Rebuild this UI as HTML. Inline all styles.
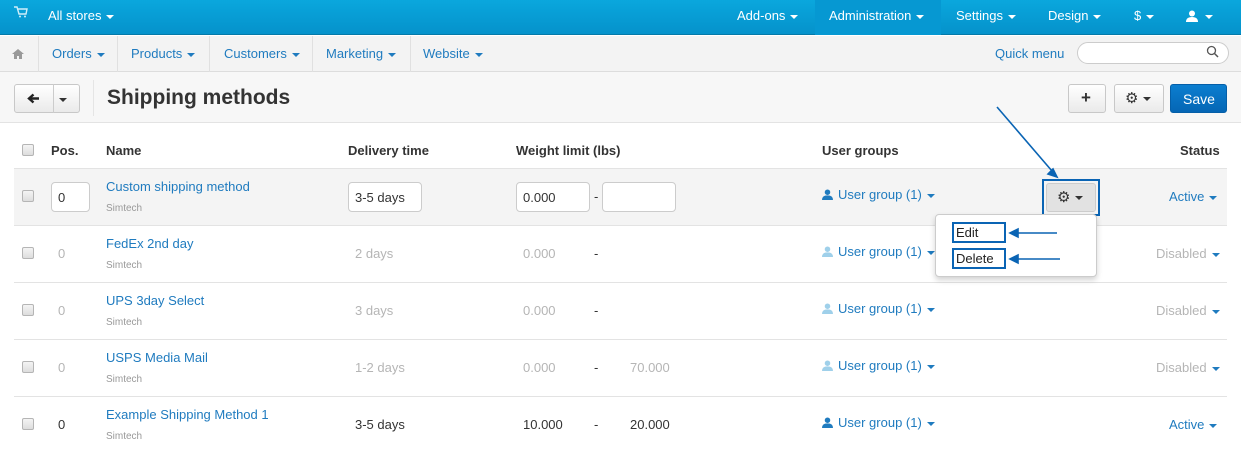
<!DOCTYPE html><html><head><style>
*{box-sizing:border-box;margin:0;padding:0}
body{width:1241px;height:459px;overflow:hidden;background:#fff;font-family:"Liberation Sans",Arial,sans-serif;font-size:13px;color:#333;position:relative}
.a{position:absolute;white-space:nowrap}
.top{position:absolute;left:0;top:0;width:1241px;height:35px;background:linear-gradient(#0aa7dd,#0592cb);border-bottom:1px solid #0479a8}
.top .a{color:#fff;font-size:13px;top:8px}
.car{display:inline-block;width:0;height:0;border-left:4px solid transparent;border-right:4px solid transparent;border-top:4px solid currentColor;vertical-align:middle;margin-left:5px}
.nav{position:absolute;left:0;top:36px;width:1241px;height:36px;background:#f3f3f3;border-bottom:1px solid #ddd}
.nav .a{color:#1f7bbf;top:10px}
.sep{position:absolute;top:0;width:1px;height:36px;background:#e0e0e0}
.hdr{position:absolute;left:0;top:72px;width:1241px;height:51px;background:#f7f7f7;border-bottom:1px solid #e3e3e3}
.btn{position:absolute;background:linear-gradient(#fff,#eaeaea);border:1px solid #c8c8c8;border-radius:3px}
.row{position:absolute;left:14px;width:1213px;border-top:1px solid #e3e3e3}
.cb{position:absolute;width:12px;height:12px;border:1px solid #b5b5b5;border-radius:2px;background:linear-gradient(#f4f4f4,#ddd)}
.lnk{color:#1f7bbf}
.sm{font-size:10px;color:#999}
.g{color:#b5b5b5}
.in{position:absolute;background:#fff;border:1px solid #ccc;border-radius:4px;padding:7px 6px}
.th{font-weight:bold;top:143px}
.ug svg{vertical-align:-1px;margin-right:5px}
</style></head><body>
<div class="top">
<svg class="a" style="left:14px;top:6px" width="14" height="12" viewBox="0 0 14 12"><path d="M0 1h3l2 7h7l1-5H4" fill="none" stroke="#cfeefa" stroke-width="1.4"/><circle cx="6" cy="10.5" r="1" fill="#cfeefa"/><circle cx="11" cy="10.5" r="1" fill="#cfeefa"/></svg>
<div class="a" style="left:48px">All stores<span class="car"></span></div>
<div style="position:absolute;left:815px;top:0;width:126px;height:35px;background:#0698d2"></div>
<div class="a" style="left:737px">Add-ons<span class="car"></span></div>
<div class="a" style="left:829px">Administration<span class="car"></span></div>
<div class="a" style="left:956px">Settings<span class="car"></span></div>
<div class="a" style="left:1048px">Design<span class="car"></span></div>
<div class="a" style="left:1134px">$<span class="car"></span></div>
<svg class="a" style="left:1186px;top:10px" width="12" height="12" viewBox="0 0 12 12"><circle cx="6" cy="3.5" r="3" fill="#fff"/><path d="M0 12q0-5 6-5t6 5z" fill="#fff"/></svg>
<div class="a" style="left:1200px;top:8px"><span class="car"></span></div>
</div>
<div class="nav">
<svg class="a" style="left:12px;top:13px" width="12" height="10" viewBox="0 0 12 10"><path d="M6 0L0 5h2v5h3V7h2v3h3V5h2z" fill="#999"/></svg>
<div class="sep" style="left:38px"></div><div class="sep" style="left:117px"></div><div class="sep" style="left:209px"></div><div class="sep" style="left:312px"></div><div class="sep" style="left:410px"></div>
<div class="a" style="left:52px">Orders<span class="car"></span></div>
<div class="a" style="left:131px">Products<span class="car"></span></div>
<div class="a" style="left:224px">Customers<span class="car"></span></div>
<div class="a" style="left:326px">Marketing<span class="car"></span></div>
<div class="a" style="left:423px">Website<span class="car"></span></div>
<div class="a" style="left:995px">Quick menu</div>
<div style="position:absolute;left:1077px;top:6px;width:152px;height:22px;border:1px solid #ccc;border-radius:11px;background:#fff"></div>
<svg class="a" style="left:1206px;top:9px" width="13" height="13" viewBox="0 0 13 13"><circle cx="5.5" cy="5.5" r="4" fill="none" stroke="#555" stroke-width="1.3"/><path d="M8.5 8.5l3.5 3.5" stroke="#555" stroke-width="1.5"/></svg>
</div>
<div class="hdr">
<div class="btn" style="left:14px;top:12px;width:66px;height:29px"></div>
<div style="position:absolute;left:53px;top:12px;width:1px;height:29px;background:#ccc"></div>
<svg class="a" style="left:27px;top:21px" width="13" height="11" viewBox="0 0 13 11"><path d="M12 5.5H3M6.5 1.5L2 5.5l4.5 4" fill="none" stroke="#222" stroke-width="2.4"/></svg>
<div class="a" style="left:59px;top:19px;color:#333"><span class="car" style="margin:0"></span></div>
<div style="position:absolute;left:93px;top:8px;width:1px;height:36px;background:#e5e5e5"></div>
<div class="a" style="left:107px;top:14px;font-size:21px;font-weight:bold;color:#333">Shipping methods</div>
<div class="btn" style="left:1068px;top:12px;width:38px;height:29px"></div>
<div class="a" style="left:1081px;top:16px;font-size:17px;font-weight:bold;color:#333">+</div>
<div class="btn" style="left:1114px;top:12px;width:50px;height:29px"></div>
<div class="a" style="left:1125px;top:17px;font-size:15px;color:#333">⚙<span class="car"></span></div>
<div style="position:absolute;left:1170px;top:12px;width:57px;height:29px;background:linear-gradient(#0b7ed0,#0566b5);border-radius:3px;border:1px solid #055fa8"></div>
<div class="a" style="left:1183px;top:19px;color:#fff;font-size:14px">Save</div>
</div>
<div class="cb" style="left:22px;top:144px"></div>
<div class="a th" style="left:51px">Pos.</div><div class="a th" style="left:106px">Name</div><div class="a th" style="left:348px">Delivery time</div><div class="a th" style="left:516px">Weight limit (lbs)</div><div class="a th" style="left:822px">User groups</div><div class="a th" style="left:1180px">Status</div>
<div class="row" style="top:168px;height:58px;background:#f4f4f4"></div>
<div class="row" style="top:225px;height:58px"></div>
<div class="row" style="top:282px;height:58px"></div>
<div class="row" style="top:339px;height:58px"></div>
<div class="row" style="top:396px;height:58px"></div>
<div class="cb" style="left:22px;top:190px"></div>
<div class="in" style="left:51px;top:182px;width:39px;height:30px">0</div>
<div class="a lnk" style="left:106px;top:179px">Custom shipping method</div><div class="a sm" style="left:106px;top:203px">Simtech</div>
<div class="in" style="left:348px;top:182px;width:74px;height:30px">3-5 days</div>
<div class="in" style="left:516px;top:182px;width:74px;height:30px">0.000</div><div class="a" style="left:594px;top:189px">-</div>
<div class="in" style="left:602px;top:182px;width:74px;height:30px"></div>
<div class="cb" style="left:22px;top:247px"></div><div class="a g" style="left:58px;top:246px">0</div>
<div class="a lnk" style="left:106px;top:236px">FedEx 2nd day</div><div class="a sm" style="left:106px;top:260px">Simtech</div>
<div class="a g" style="left:355px;top:246px">2 days</div><div class="a g" style="left:523px;top:246px">0.000</div><div class="a" style="left:594px;top:246px">-</div>
<div class="cb" style="left:22px;top:304px"></div><div class="a g" style="left:58px;top:303px">0</div>
<div class="a lnk" style="left:106px;top:293px">UPS 3day Select</div><div class="a sm" style="left:106px;top:317px">Simtech</div>
<div class="a g" style="left:355px;top:303px">3 days</div><div class="a g" style="left:523px;top:303px">0.000</div><div class="a" style="left:594px;top:303px">-</div>
<div class="cb" style="left:22px;top:361px"></div><div class="a g" style="left:58px;top:360px">0</div>
<div class="a lnk" style="left:106px;top:350px">USPS Media Mail</div><div class="a sm" style="left:106px;top:374px">Simtech</div>
<div class="a g" style="left:355px;top:360px">1-2 days</div><div class="a g" style="left:523px;top:360px">0.000</div><div class="a" style="left:594px;top:360px">-</div><div class="a g" style="left:630px;top:360px">70.000</div>
<div class="cb" style="left:22px;top:418px"></div><div class="a" style="left:58px;top:417px">0</div>
<div class="a lnk" style="left:106px;top:407px">Example Shipping Method 1</div><div class="a sm" style="left:106px;top:431px">Simtech</div>
<div class="a" style="left:355px;top:417px">3-5 days</div><div class="a" style="left:523px;top:417px">10.000</div><div class="a" style="left:594px;top:417px">-</div><div class="a" style="left:630px;top:417px">20.000</div>
<div class="a lnk ug" style="left:822px;top:187px"><svg width="11" height="11" viewBox="0 0 12 12"><circle cx="6" cy="3.5" r="3" fill="#1f7bbf"/><path d="M0 12q0-5 6-5t6 5z" fill="#1f7bbf"/></svg>User group (1)<span class="car"></span></div>
<div class="a lnk ug" style="left:822px;top:244px"><svg width="11" height="11" viewBox="0 0 12 12"><circle cx="6" cy="3.5" r="3" fill="#9fd0ea"/><path d="M0 12q0-5 6-5t6 5z" fill="#9fd0ea"/></svg>User group (1)<span class="car"></span></div>
<div class="a lnk ug" style="left:822px;top:301px"><svg width="11" height="11" viewBox="0 0 12 12"><circle cx="6" cy="3.5" r="3" fill="#9fd0ea"/><path d="M0 12q0-5 6-5t6 5z" fill="#9fd0ea"/></svg>User group (1)<span class="car"></span></div>
<div class="a lnk ug" style="left:822px;top:358px"><svg width="11" height="11" viewBox="0 0 12 12"><circle cx="6" cy="3.5" r="3" fill="#9fd0ea"/><path d="M0 12q0-5 6-5t6 5z" fill="#9fd0ea"/></svg>User group (1)<span class="car"></span></div>
<div class="a lnk ug" style="left:822px;top:415px"><svg width="11" height="11" viewBox="0 0 12 12"><circle cx="6" cy="3.5" r="3" fill="#1f7bbf"/><path d="M0 12q0-5 6-5t6 5z" fill="#1f7bbf"/></svg>User group (1)<span class="car"></span></div>
<div class="a lnk" style="left:1169px;top:189px">Active<span class="car"></span></div>
<div class="a g" style="left:1156px;top:246px">Disabled<span class="car" style="color:#1f7bbf"></span></div>
<div class="a g" style="left:1156px;top:303px">Disabled<span class="car" style="color:#1f7bbf"></span></div>
<div class="a g" style="left:1156px;top:360px">Disabled<span class="car" style="color:#1f7bbf"></span></div>
<div class="a lnk" style="left:1169px;top:417px">Active<span class="car"></span></div>
<div style="position:absolute;left:1042px;top:179px;width:58px;height:37px;border:2px solid #0a64b4"></div>
<div style="position:absolute;left:1046px;top:183px;width:50px;height:29px;background:#e2e2e2;border:1px solid #ccc;border-radius:3px"></div>
<div class="a" style="left:1057px;top:188px;color:#333;font-size:15px">⚙<span class="car"></span></div>
<div style="position:absolute;left:935px;top:214px;width:162px;height:63px;background:#fff;border:1px solid #ccc;border-radius:4px;box-shadow:0 3px 6px rgba(0,0,0,.18)"></div>
<div class="a" style="left:952px;top:222px;width:54px;height:21px;border:2px solid #0a64b4;padding:1px 2px;color:#222">Edit</div>
<div class="a" style="left:952px;top:248px;width:54px;height:21px;border:2px solid #0a64b4;padding:1px 2px;color:#222">Delete</div>
<svg class="a" style="left:0;top:0" width="1241" height="459"><g stroke="#0a64b4" stroke-width="1.6" fill="#0a64b4"><line x1="997" y1="107" x2="1052" y2="171"/><path d="M1057 177l-9-3 5-5z"/><line x1="1057" y1="233" x2="1016" y2="233"/><path d="M1010 233l8-4v8z"/><line x1="1060" y1="259" x2="1016" y2="259"/><path d="M1010 259l8-4v8z"/></g></svg>
</body></html>
